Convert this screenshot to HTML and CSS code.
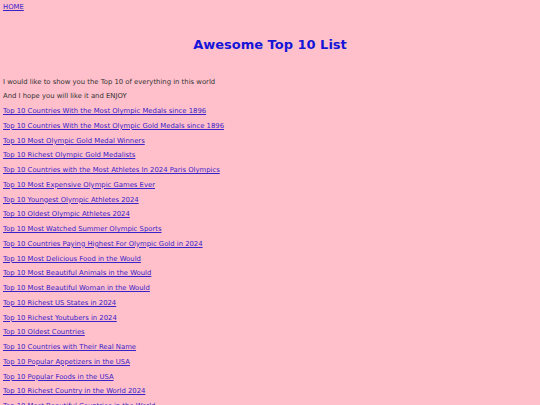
FILE: index.html
```html
<!DOCTYPE html>
<html>
<head>
<meta charset="utf-8">
<link rel="stylesheet" href="styles.css">
</head>
<body>
<nav class="topnav"><a href="#" class="home">HOME</a></nav>
<h1 class="title">Awesome Top 10 List</h1>
<p class="intro">I would like to show you the Top 10 of everything in this world</p>
<p class="intro">And I hope you will like it and ENJOY</p>
<ul class="list">
<li><a href="#">Top 10 Countries With the Most Olympic Medals since 1896</a></li>
<li><a href="#">Top 10 Countries With the Most Olympic Gold Medals since 1896</a></li>
<li><a href="#">Top 10 Most Olympic Gold Medal Winners</a></li>
<li><a href="#">Top 10 Richest Olympic Gold Medalists</a></li>
<li><a href="#">Top 10 Countries with the Most Athletes In 2024 Paris Olympics</a></li>
<li><a href="#">Top 10 Most Expensive Olympic Games Ever</a></li>
<li><a href="#">Top 10 Youngest Olympic Athletes 2024</a></li>
<li><a href="#">Top 10 Oldest Olympic Athletes 2024</a></li>
<li><a href="#">Top 10 Most Watched Summer Olympic Sports</a></li>
<li><a href="#">Top 10 Countries Paying Highest For Olympic Gold in 2024</a></li>
<li><a href="#">Top 10 Most Delicious Food in the Would</a></li>
<li><a href="#">Top 10 Most Beautiful Animals in the Would</a></li>
<li><a href="#">Top 10 Most Beautiful Woman in the Would</a></li>
<li><a href="#">Top 10 Richest US States in 2024</a></li>
<li><a href="#">Top 10 Richest Youtubers in 2024</a></li>
<li><a href="#">Top 10 Oldest Countries</a></li>
<li><a href="#">Top 10 Countries with Their Real Name</a></li>
<li><a href="#">Top 10 Popular Appetizers in the USA</a></li>
<li><a href="#">Top 10 Popular Foods in the USA</a></li>
<li><a href="#">Top 10 Richest Country in the World 2024</a></li>
<li><a href="#">Top 10 Most Beautiful Countries in the World</a></li>
</ul>
</body>
</html>
```
FILE: styles.css
```css
html { background: #ffc0cb; }
body {
  margin: 0;
  padding: 3px;
  font-family: Verdana, "DejaVu Sans", sans-serif;
  font-size: 6.85px;
  line-height: 8px;
  color: #333;
}
a { color: #3a22c8; }
.topnav { height: 8px; }
.title {
  margin: 26px 0 0;
  text-align: center;
  font-size: 13px;
  line-height: 16px;
  color: #1515d8;
}
.intro { margin: 24.5px 0 0; }
.intro + .intro { margin-top: 6.75px; }
.list { list-style: none; margin: 0; padding: 0; }
.list li { margin-top: 6.75px; }
```
